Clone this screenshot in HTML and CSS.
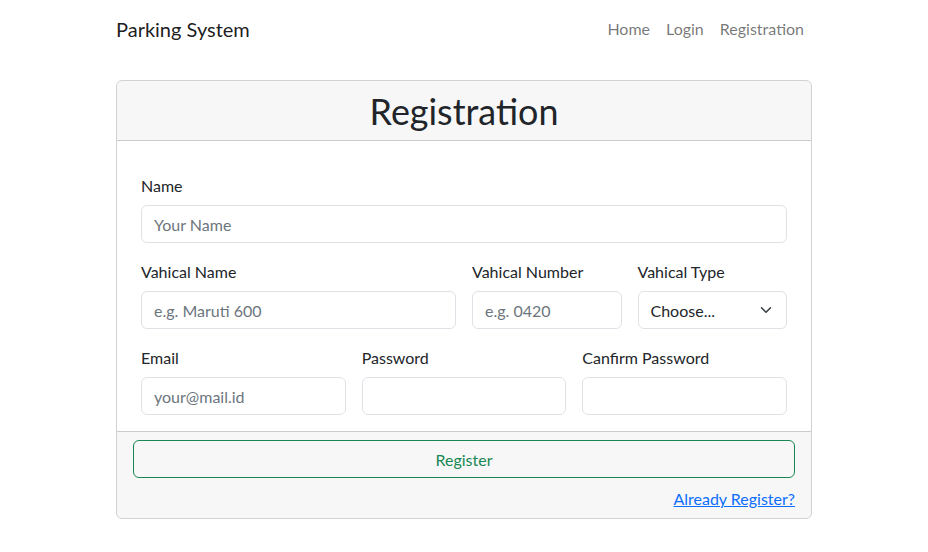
FILE: index.html
```html
<!DOCTYPE html>
<html lang="en">
<head>
<meta charset="utf-8">
<title>Parking System</title>
<link rel="stylesheet" href="styles.css">
</head>
<body>
<nav class="navbar">
  <div class="container nav-inner">
    <a class="brand" href="#">Parking System</a>
    <ul class="nav-links">
      <li><a href="#">Home</a></li>
      <li><a href="#">Login</a></li>
      <li><a href="#">Registration</a></li>
    </ul>
  </div>
</nav>
<main class="container">
  <div class="card">
    <div class="card-header"><h1>Registration</h1></div>
    <form class="card-body">
      <div class="row">
        <div class="field col-12">
          <label>Name</label>
          <input class="input" type="text" placeholder="Your Name">
        </div>
      </div>
      <div class="row">
        <div class="field col-6">
          <label>Vahical Name</label>
          <input class="input" type="text" placeholder="e.g. Maruti 600">
        </div>
        <div class="field col-3">
          <label>Vahical Number</label>
          <input class="input" type="text" placeholder="e.g. 0420">
        </div>
        <div class="field col-3">
          <label>Vahical Type</label>
          <div class="select">
            <span>Choose...</span>
            <svg width="16" height="16" viewBox="0 0 16 16"><path d="M2 5l6 6 6-6" fill="none" stroke="#343a40" stroke-width="2" stroke-linecap="round" stroke-linejoin="round"/></svg>
          </div>
        </div>
      </div>
      <div class="row">
        <div class="field col-4">
          <label>Email</label>
          <input class="input" type="email" placeholder="your@mail.id">
        </div>
        <div class="field col-4">
          <label>Password</label>
          <input class="input" type="password">
        </div>
        <div class="field col-4">
          <label>Canfirm Password</label>
          <input class="input" type="password">
        </div>
      </div>
    </form>
    <div class="card-footer">
      <button class="btn" type="button">Register</button>
      <div class="footer-link"><a href="#">Already Register?</a></div>
    </div>
  </div>
</main>
</body>
</html>
```
FILE: styles.css
```css
* { box-sizing: border-box; }
body {
  margin: 0;
  font-family: Lato, "Liberation Sans", sans-serif;
  font-size: 16px;
  line-height: 1.5;
  color: #212529;
  background: #fff;
}
.container {
  width: 720px;
  margin: 0 auto;
  padding: 0 12px;
}
.navbar { padding: 9px 0 7px; }
.nav-inner {
  display: flex;
  align-items: center;
  justify-content: space-between;
}
.brand {
  font-size: 20px;
  line-height: 30px;
  padding: 5px 0;
  color: rgba(0,0,0,.9);
  text-decoration: none;
}
.nav-links {
  display: flex;
  list-style: none;
  margin: 0;
  padding: 0;
}
.nav-links a {
  display: block;
  padding: 8px;
  line-height: 24px;
  color: rgba(0,0,0,.55);
  text-decoration: none;
}
main.container { margin-top: 24px; }
.card {
  border: 1px solid rgba(0,0,0,.175);
  border-radius: 6px;
  overflow: hidden;
}
.card-header {
  background: rgba(0,0,0,.03);
  border-bottom: 1px solid rgba(0,0,0,.175);
  padding: 8px 16px;
  text-align: center;
}
.card-header h1 {
  margin: 0;
  padding-top: 2px;
  font-size: 35.92px;
  font-weight: 400;
  line-height: 41px;
}
.card-body {
  padding: 32px 24px 16px;
  display: flex;
  flex-direction: column;
  gap: 16px;
}
.row {
  display: flex;
  gap: 16px;
}
.field { display: flex; flex-direction: column; min-width: 0; }
.col-12 { flex: 1 1 100%; }
.col-6 { flex: 0 0 calc((100% + 16px) * 6 / 12 - 16px); }
.col-3 { flex: 0 0 calc((100% + 16px) * 3 / 12 - 16px); }
.col-4 { flex: 1 1 0; }
label {
  display: block;
  padding-top: 1px;
  margin-bottom: 7px;
  line-height: 24px;
}
.input, .select {
  display: block;
  width: 100%;
  height: 38px;
  padding: 6px 12px;
  font-family: inherit;
  font-size: 16px;
  line-height: 24px;
  color: #212529;
  background: #fff;
  border: 1px solid #dee2e6;
  border-radius: 6px;
}
.input::placeholder { color: #6c757d; opacity: 1; }
.select {
  display: flex;
  align-items: center;
  justify-content: space-between;
  padding-right: 12px;
}
.select span { padding-top: 1px; }
.select svg { width: 16px; height: 12px; }
.card-footer {
  background: rgba(0,0,0,.03);
  border-top: 1px solid rgba(0,0,0,.175);
  padding: 8px 16px;
}
.btn {
  display: block;
  width: 100%;
  height: 38px;
  padding: 7px 12px 5px;
  font-family: inherit;
  font-size: 16px;
  line-height: 24px;
  color: #198754;
  background: transparent;
  border: 1px solid #198754;
  border-radius: 6px;
  cursor: pointer;
}
.footer-link {
  margin-top: 8px;
  padding-top: 1px;
  margin-bottom: -1px;
  text-align: right;
  line-height: 24px;
}
.footer-link a { color: #0d6efd; text-decoration: underline; }
```
